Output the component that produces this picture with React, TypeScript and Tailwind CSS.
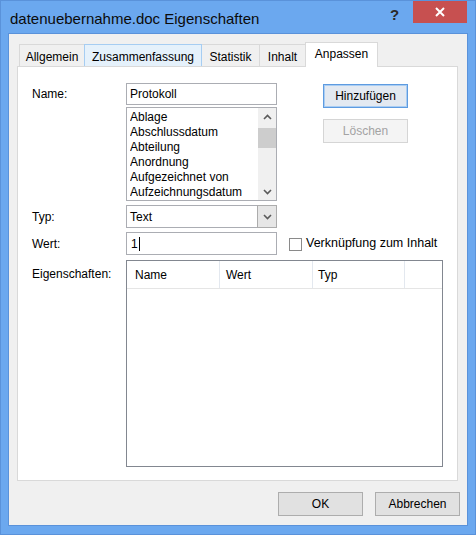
import React from 'react';

const tabs = [
  { label: 'Allgemein', w: 'w-[66px]', hover: false },
  { label: 'Zusammenfassung', w: 'w-[118px]', hover: true },
  { label: 'Statistik', w: 'w-[59px]', hover: false },
  { label: 'Inhalt', w: 'w-[47px]', hover: false },
];

const listItems = [
  'Ablage',
  'Abschlussdatum',
  'Abteilung',
  'Anordnung',
  'Aufgezeichnet von',
  'Aufzeichnungsdatum',
];

function Chevron({ up }: { up?: boolean }) {
  return (
    <svg width="9" height="6" viewBox="0 0 9 6" className="block">
      <path
        d={up ? 'M1 5 L4.5 1.5 L8 5' : 'M1 1 L4.5 4.5 L8 1'}
        fill="none"
        stroke="#5a5a5a"
        strokeWidth="1.6"
      />
    </svg>
  );
}

function WinButton({
  children,
  variant = 'normal',
}: {
  children: React.ReactNode;
  variant?: 'normal' | 'default' | 'disabled';
}) {
  const styles = {
    normal: 'border-[#adadad] bg-[#e1e1e1] text-black',
    default:
      'border-[#5e9be0] bg-[#e3e9f1] text-black shadow-[inset_0_0_0_1px_#a9cdf3]',
    disabled: 'border-[#d5d5d5] bg-[#f4f4f4] text-[#a3a3a3]',
  }[variant];
  return (
    <div
      className={`w-[85px] h-[24px] border flex items-center justify-center ${styles}`}
    >
      {children}
    </div>
  );
}

export default function App() {
  return (
    <div
      className="w-[476px] h-[535px] bg-[#6ba8ef] border border-[#5a92da] flex flex-col text-[12px] text-black"
      style={{ fontFamily: '"Liberation Sans", Arial, sans-serif' }}
    >
      {/* Title bar */}
      <div className="h-[32px] flex items-start">
        <div className="flex-1 pl-[9px] pt-[9px] text-[15px] leading-[18px] text-[#0b0b0b]">
          datenuebernahme.doc Eigenschaften
        </div>
        <div className="pt-[6px] w-[23px] text-[15px] font-bold leading-[16px] text-[#2a2a2a]">
          ?
        </div>
        <div className="mr-[8px] w-[54px] h-[22px] bg-[#c75050] flex items-center justify-center">
          <svg width="10" height="10" viewBox="0 0 10 10">
            <path d="M1 1 L9 9 M9 1 L1 9" stroke="white" strokeWidth="2" />
          </svg>
        </div>
      </div>

      {/* Client area */}
      <div className="mx-[7px] h-[493px] bg-[#f0f0f0] border border-[#5a92da] flex flex-col pt-[8px]">
        {/* Tabs */}
        <div className="flex items-end h-[24px] ml-[10px]">
          {tabs.map((t, i) => (
            <div
              key={t.label}
              className={`${t.w} h-[22px] border border-b-0 flex items-center justify-center pt-[2px] ${
                i > 0 ? '-ml-px' : ''
              } ${
                t.hover
                  ? 'bg-[#e5f1fb] border-[#a6cdf2] relative z-10'
                  : 'bg-[#f0f0f0] border-[#d9d9d9]'
              }`}
            >
              {t.label}
            </div>
          ))}
          <div className="w-[73px] h-[25px] -ml-px -mb-px relative z-20 bg-white border border-b-0 border-[#d9d9d9] flex items-center justify-center pb-[2px]">
            Anpassen
          </div>
        </div>

        {/* Tab panel */}
        <div className="ml-[8px] w-[441px] h-[415px] bg-white border border-[#d9d9d9] pt-[16px]">
          {/* Name row */}
          <div className="flex">
            <div className="w-[108px] pl-[14px] h-[22px] flex items-center">Name:</div>
            <div className="w-[151px] flex flex-col">
              <div className="h-[22px] border border-[#abadb3] flex items-center pl-[3px]">
                Protokoll
              </div>
              <div className="mt-[2px] h-[94px] border border-[#abadb3] flex">
                <div className="flex-1 pl-[3px] pt-[2px] leading-[15px]">
                  {listItems.map((item) => (
                    <div key={item} className="h-[15px] whitespace-nowrap overflow-hidden">
                      {item}
                    </div>
                  ))}
                </div>
                <div className="w-[18px] bg-[#f0f0f0] flex flex-col items-center">
                  <div className="h-[18px] flex items-center justify-center">
                    <Chevron up />
                  </div>
                  <div className="mt-[2px] w-full h-[20px] bg-[#cdcdcd]" />
                  <div className="flex-1" />
                  <div className="h-[17px] flex items-center justify-center">
                    <Chevron />
                  </div>
                </div>
              </div>
            </div>
            <div className="ml-[46px] flex flex-col pt-[1px]">
              <WinButton variant="default">Hinzufügen</WinButton>
              <div className="mt-[11px]">
                <WinButton variant="disabled">Löschen</WinButton>
              </div>
            </div>
          </div>

          {/* Typ row */}
          <div className="flex mt-[4px]">
            <div className="w-[108px] pl-[14px] h-[23px] flex items-center">Typ:</div>
            <div className="w-[151px] h-[23px] border border-[#abadb3] flex">
              <div className="flex-1 pl-[3px] flex items-center">Text</div>
              <div className="w-[20px] border border-[#acacac] -my-px -mr-px bg-[#e6e6e6] flex items-center justify-center">
                <Chevron />
              </div>
            </div>
          </div>

          {/* Wert row */}
          <div className="flex mt-[4px] items-center">
            <div className="w-[108px] pl-[14px] h-[23px] flex items-center">Wert:</div>
            <div className="w-[151px] h-[23px] border border-[#abadb3] flex items-center pl-[4px]">
              <span>1</span>
              <span className="ml-[1px] w-px h-[14px] bg-black" />
            </div>
            <div className="ml-[12px] mt-[1px] w-[13px] h-[13px] border border-[#8a8a8a] bg-white" />
            <div className="ml-[4px] text-[12.5px]">Verknüpfung zum Inhalt</div>
          </div>

          {/* Eigenschaften row */}
          <div className="flex mt-[5px]">
            <div className="w-[108px] pl-[14px] pt-[5px]">Eigenschaften:</div>
            <div className="w-[317px] h-[207px] border border-[#828790] flex flex-col">
              <div className="h-[28px] flex border-b border-[#e5e5e5]">
                <div className="w-[93px] pl-[8px] flex items-center border-r border-[#e3e8ef]">
                  Name
                </div>
                <div className="w-[93px] pl-[6px] flex items-center border-r border-[#e3e8ef]">
                  Wert
                </div>
                <div className="w-[92px] pl-[5px] flex items-center border-r border-[#e3e8ef]">
                  Typ
                </div>
                <div className="flex-1" />
              </div>
            </div>
          </div>
        </div>

        {/* Dialog buttons */}
        <div className="mt-[11px] flex justify-end gap-[12px] pr-[7px]">
          <WinButton>OK</WinButton>
          <WinButton>Abbrechen</WinButton>
        </div>
      </div>
    </div>
  );
}
